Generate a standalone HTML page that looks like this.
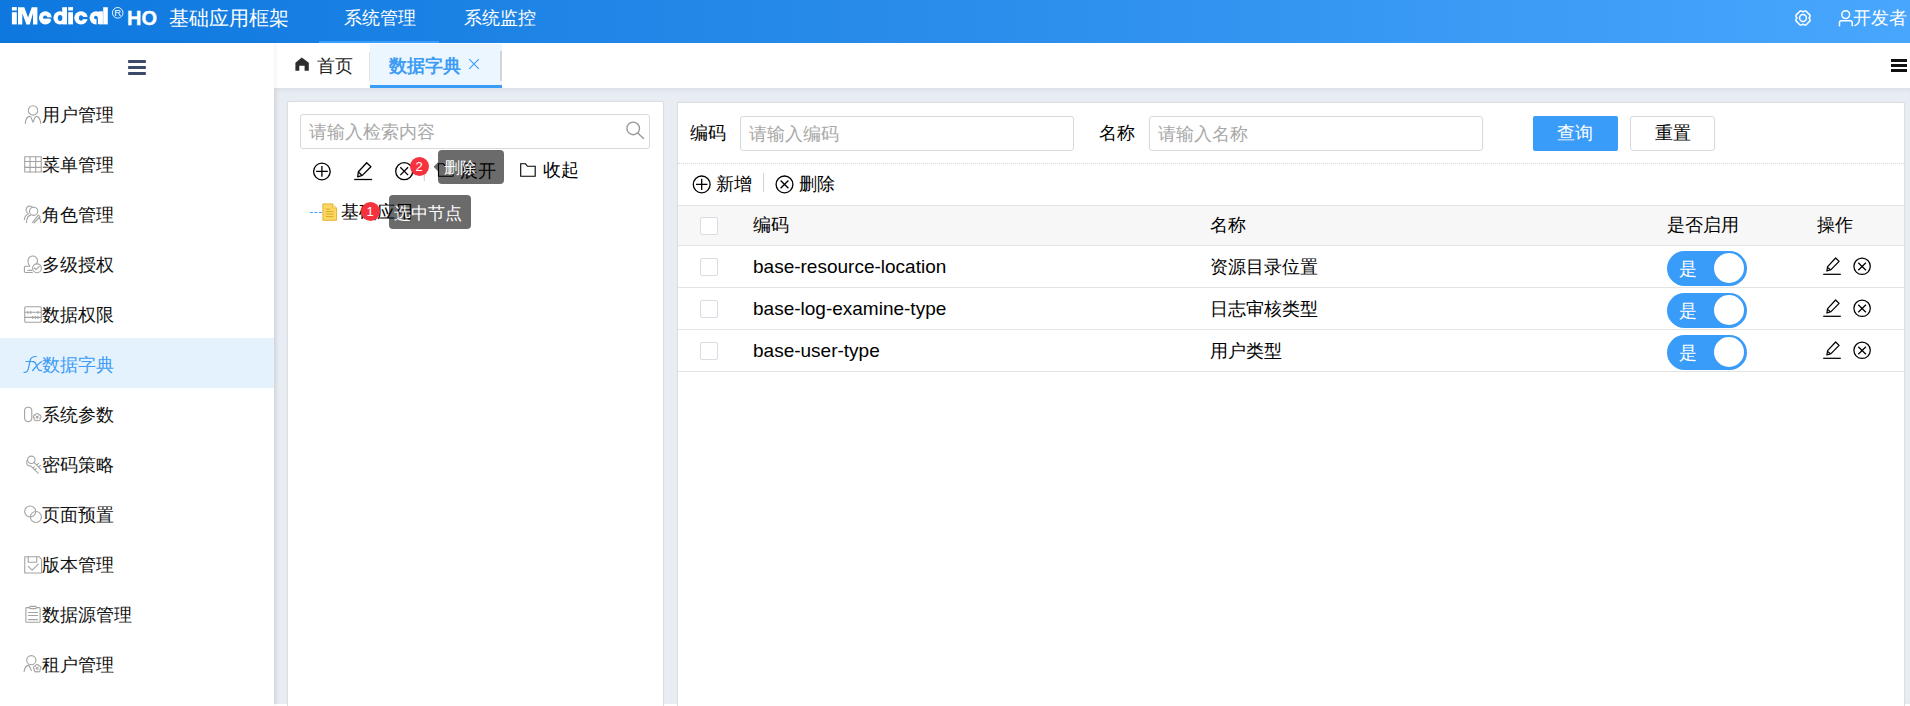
<!DOCTYPE html>
<html><head><meta charset="utf-8">
<style>
*{box-sizing:border-box;margin:0;padding:0}
html,body{width:1910px;height:706px;overflow:hidden;background:#fff;font-family:"Liberation Sans",sans-serif;color:#000}
.a{position:absolute}
.hdr{left:0;top:0;width:1910px;height:43px;background:linear-gradient(to right,#0e78df 0%,#2a8deb 50%,#48a6fd 100%)}
.w{color:#fff;white-space:nowrap;line-height:1}
.side{left:0;top:43px;width:274px;height:663px;background:#fff;box-shadow:1px 0 5px rgba(0,0,0,.07);z-index:3}
.mi{left:0;width:274px;height:50px}
.mi .t{position:absolute;left:41.5px;top:17px;font-size:17.5px;line-height:20px;white-space:nowrap;color:#111}
.mi.act{background:#e3f2fd}
.mi.act .t{color:#3d9cf5}
.mi svg.ic{position:absolute;left:20px;top:12px}
.tabbar{left:274px;top:43px;width:1636px;height:45px;background:#fff;z-index:2}
.content{left:274px;top:88px;width:1636px;height:616px;background:#e8ecf3;box-shadow:inset 2px 2px 4px rgba(0,0,0,.06)}
.card{background:#fff;border:1px solid #dcdde0;border-radius:2px;box-shadow:0 0 1.5px rgba(0,0,0,.06)}
.inp{border:1px solid #d6d9de;border-radius:3px;background:#fff}
.ph{color:#a8a8a8;font-size:18px;line-height:20px;white-space:nowrap}
.t18{font-size:18px;line-height:20px;white-space:nowrap}
.tip{background:rgba(0,0,0,.58);border-radius:4px;color:#fff;font-size:16px;line-height:18px;white-space:nowrap}
.badge{width:19px;height:19px;border-radius:50%;background:#f5333f;color:#fff;font-size:13px;line-height:19px;text-align:center}
.row{left:0;width:1226px;height:42px;border-bottom:1px solid #e3e3e3}
.cb{width:18px;height:18px;border:1px solid #d9dde3;border-radius:2px;background:#fff}
.tog{width:80px;height:35px;border-radius:18px;background:#3a9cf9}
.knob{width:30px;height:30px;border-radius:50%;background:#fff}
</style></head><body>
<!-- header -->
<div class="a hdr"></div>
<svg class="a" style="left:0;top:0" width="130" height="32" viewBox="0 0 130 32">
<defs><mask id="lm" maskUnits="userSpaceOnUse" x="0" y="0" width="130" height="32">
<rect x="0" y="0" width="130" height="32" fill="#000"/>
<g fill="#fff">
<rect x="11.9" y="7.1" width="4.9" height="3.4"/><rect x="11.9" y="12.2" width="4.9" height="12.2"/>
<path d="M18 24.4V7.2H24.3L28.05 17.4L31.8 7.2H37.4V24.4H33V13.2L29.75 24.4H26.4L22.3 13.2V24.4Z"/>
<ellipse cx="45.35" cy="17.85" rx="6.45" ry="6.55"/>
<ellipse cx="59.9" cy="17.85" rx="6.5" ry="6.55"/><rect x="62.2" y="7.2" width="4.8" height="17.2"/>
<rect x="68.2" y="7.1" width="4.8" height="3.4"/><rect x="68.2" y="12.2" width="4.8" height="12.2"/>
<ellipse cx="81" cy="17.85" rx="6.8" ry="6.55"/>
<ellipse cx="96.15" cy="17.85" rx="6.65" ry="6.55"/><rect x="99" y="11.3" width="3.9" height="13.1"/>
<rect x="103.2" y="7.2" width="4.6" height="17.2"/>
</g>
<g fill="#000">
<path d="M43.1 17.9A2.1 2.3 0 0 1 47.3 17.9Z"/><rect x="43.1" y="17.3" width="9" height="1.3"/><path d="M49.2 18.5H52V20.6Z"/>
<ellipse cx="60.1" cy="17.95" rx="2.3" ry="3.05"/>
<ellipse cx="81" cy="17.95" rx="2.05" ry="2.75"/><rect x="82" y="16.9" width="6" height="2.3"/>
<circle cx="95.8" cy="17.6" r="1.75"/><rect x="96.5" y="17.6" width="1.4" height="7"/>
</g>
</mask></defs>
<rect x="0" y="0" width="130" height="32" fill="#fff" mask="url(#lm)"/>
<circle cx="117.7" cy="12.8" r="5.3" fill="none" stroke="#fff" stroke-width="0.9"/>
<text x="117.7" y="16.3" font-size="9.5" fill="#fff" text-anchor="middle" font-family="Liberation Sans">R</text>
</svg>

<div class="a w" style="left:127px;top:8px;font-size:20px;font-weight:bold;-webkit-text-stroke:0.35px #fff">HO</div>
<div class="a w" style="left:169px;top:8px;font-size:20px">基础应用框架</div>
<div class="a w" style="left:344px;top:9px;font-size:18px">系统管理</div>
<div class="a" style="left:319px;top:41px;width:120px;height:2px;background:#3a9eff"></div>
<div class="a w" style="left:464px;top:9px;font-size:18px">系统监控</div>
<svg class="a" style="left:1790.2px;top:5.4px" width="26" height="26" viewBox="0 0 26 26" fill="none" stroke="#fff" stroke-width="1.5" stroke-linejoin="round"><path d="M10.10 6.00L11.70 6.00L13.00 7.00L14.30 6.00L15.90 6.00L20.00 10.10L20.00 11.70L19.00 13.00L20.00 14.30L20.00 15.90L15.90 20.00L14.30 20.00L13.00 19.00L11.70 20.00L10.10 20.00L6.00 15.90L6.00 14.30L7.00 13.00L6.00 11.70L6.00 10.10Z"/><circle cx="13" cy="13" r="3.4"/></svg>
<svg class="a" style="left:1836px;top:8px" width="20" height="20" viewBox="0 0 20 20" fill="none" stroke="#fff" stroke-width="1.5" stroke-linecap="round"><circle cx="9.7" cy="6.6" r="3.9"/><path d="M3.5 17.7V14.6Q3.5 12.7 5.4 12.7H14.3Q16.2 12.7 16.2 14.6V17.7"/></svg>
<div class="a w" style="left:1853px;top:9px;font-size:18px">开发者</div>

<!-- sidebar -->
<div class="a side">
  <div class="a" style="left:128px;top:17px;width:18px;height:2.5px;background:#3b4a6b;border-radius:1px"></div>
  <div class="a" style="left:128px;top:23px;width:18px;height:2.5px;background:#3b4a6b;border-radius:1px"></div>
  <div class="a" style="left:128px;top:29px;width:18px;height:2.5px;background:#3b4a6b;border-radius:1px"></div>
  <div class="a mi" style="top:45px"><svg class="ic" width="25" height="30" viewBox="0 0 25 30" fill="none" stroke="#a3a3a3" stroke-width="1.1" stroke-linecap="round" stroke-linejoin="round"><circle cx="13" cy="10.4" r="4.7"/><path d="M5.3 23.4C5.8 19 7.5 16.4 9.6 16.4C11 16.4 12.2 20 13 22.3C13.8 20 15 16.4 16.4 16.4C18.5 16.4 20.2 19 20.7 23.4"/></svg><span class="t">用户管理</span></div>
  <div class="a mi" style="top:95px"><svg class="ic" width="25" height="30" viewBox="0 0 25 30" fill="none" stroke="#a3a3a3" stroke-width="1.1" stroke-linecap="round" stroke-linejoin="round"><rect x="4.75" y="6.7" width="16.5" height="15.3"/><path d="M10 6.7V22M15.7 6.7V22M4.75 11.5H21.2M4.75 17.4H21.2"/></svg><span class="t">菜单管理</span></div>
  <div class="a mi" style="top:145px"><svg class="ic" width="25" height="30" viewBox="0 0 25 30" fill="none" stroke="#a3a3a3" stroke-width="1.1" stroke-linecap="round" stroke-linejoin="round"><path d="M12 6.6A3.9 3.9 0 1 0 8.2 13.4"/><circle cx="13.6" cy="11.3" r="4.1"/><path d="M4.3 19.6C4.8 16.5 6.3 14.6 8 14.2"/><path d="M6.4 22.5C6.8 18 8.5 15.6 10.5 15.4"/><path d="M12.3 22.5L18.4 15.2L20 16.6L13.9 23M20.8 22.5C20.6 20 20 18.5 19.5 17.5"/></svg><span class="t">角色管理</span></div>
  <div class="a mi" style="top:195px"><svg class="ic" width="25" height="30" viewBox="0 0 25 30" fill="none" stroke="#a3a3a3" stroke-width="1.1" stroke-linecap="round" stroke-linejoin="round"><path d="M9.6 15.8C8.3 14.8 8 13 8 11.2A4.75 4.75 0 0 1 17.5 10.4C17.4 11.5 17.2 12.6 16.6 13.6"/><path d="M12.3 22.5H5.5Q4.4 22.5 4.4 21.3V17.4Q4.4 16.2 5.5 16.2H9.6"/><path d="M8 20.4H11.9"/><circle cx="17" cy="18.3" r="4.4"/><path d="M14.3 18L16 19.6L19.3 16.4"/></svg><span class="t">多级授权</span></div>
  <div class="a mi" style="top:245px"><svg class="ic" width="25" height="30" viewBox="0 0 25 30" fill="none" stroke="#a3a3a3" stroke-width="1.1" stroke-linecap="round" stroke-linejoin="round"><rect x="4.75" y="6.7" width="16.5" height="15.6" rx="1"/><path d="M4.75 12.3H21.2M4.75 17.4H21.2M7.9 11.2V13.4M10.8 11.2V13.4M18 11.2V13.4M12.75 16.3V18.5M15.3 16.3V18.5M17.9 16.3V18.5"/></svg><span class="t">数据权限</span></div>
  <div class="a mi act" style="top:295px"><svg class="ic" width="25" height="30" viewBox="0 0 25 30" fill="none" stroke="#3d9cf5" stroke-width="1.2" stroke-linecap="round"><path d="M4 22.4C6.3 22.6 7.6 21.8 8.3 18.8L10.3 10C10.9 7.5 12.4 6.4 16.2 6.5"/><path d="M6 11.5H13.2"/><path d="M12.4 11.7C14.3 11.2 15.2 12.2 16.1 14.5L17.6 18.2C18.4 20.2 19.6 20.9 21.6 20.4"/><path d="M12.6 20.6C14.5 18.6 17.5 14.2 21.8 11.6"/></svg><span class="t">数据字典</span></div>
  <div class="a mi" style="top:345px"><svg class="ic" width="25" height="30" viewBox="0 0 25 30" fill="none" stroke="#a3a3a3" stroke-width="1.1" stroke-linecap="round" stroke-linejoin="round"><rect x="4.6" y="7.3" width="7.2" height="14.3" rx="3.5"/><path d="M15.55 15.03C15.10 12.95 19.30 12.95 18.85 15.03C20.69 13.96 21.99 17.95 19.86 18.17C21.46 19.58 18.06 22.05 17.20 20.10C16.34 22.05 12.94 19.58 14.54 18.17C12.41 17.95 13.71 13.96 15.55 15.03Z"/><circle cx="17.2" cy="17.3" r="0.9"/></svg><span class="t">系统参数</span></div>
  <div class="a mi" style="top:395px"><svg class="ic" width="25" height="30" viewBox="0 0 25 30" fill="none" stroke="#a3a3a3" stroke-width="1.1" stroke-linecap="round" stroke-linejoin="round"><circle cx="11.3" cy="9.8" r="3.7"/><path d="M7.5 9.6A4 4 0 0 0 10.2 16.2"/><path d="M14 12.4L21 19.6M18.5 13.4L17.2 14.7M20.4 15.3L19.1 16.6M10.6 15.8L18.2 23.2M14.3 16.8L13 18.1M16.2 18.7L14.9 20"/></svg><span class="t">密码策略</span></div>
  <div class="a mi" style="top:445px"><svg class="ic" width="25" height="30" viewBox="0 0 25 30" fill="none" stroke="#a3a3a3" stroke-width="1.1" stroke-linecap="round" stroke-linejoin="round"><circle cx="10.2" cy="11.5" r="5.5"/><circle cx="15.9" cy="17" r="5.5"/></svg><span class="t">页面预置</span></div>
  <div class="a mi" style="top:495px"><svg class="ic" width="25" height="30" viewBox="0 0 25 30" fill="none" stroke="#a3a3a3" stroke-width="1.1" stroke-linecap="round" stroke-linejoin="round"><path d="M4.75 6.7H19L21.6 9.3V23H4.75Z"/><path d="M8.2 6.7V12.3H16.7V6.7"/><path d="M8.3 16.4L12.1 20.2L18.3 14.2"/></svg><span class="t">版本管理</span></div>
  <div class="a mi" style="top:545px"><svg class="ic" width="25" height="30" viewBox="0 0 25 30" fill="none" stroke="#a3a3a3" stroke-width="1.1" stroke-linecap="round" stroke-linejoin="round"><rect x="5.9" y="7.6" width="14.2" height="14.6" rx="0.8"/><rect x="9.5" y="6.4" width="7" height="2.2" rx="1.1" fill="#fff"/><path d="M8.5 12.5H17.6M8.5 15.5H17.6M8.5 19.6H17.6"/></svg><span class="t">数据源管理</span></div>
  <div class="a mi" style="top:595px"><svg class="ic" width="25" height="30" viewBox="0 0 25 30" fill="none" stroke="#a3a3a3" stroke-width="1.1" stroke-linecap="round" stroke-linejoin="round"><circle cx="11.3" cy="10.2" r="4.6"/><path d="M4.1 21.7C4.6 18 6.3 15.6 8.5 15.1C9.5 16.5 10.6 18.8 11.5 20.6"/><path d="M15.55 16.13C15.10 14.05 19.30 14.05 18.85 16.13C20.69 15.06 21.99 19.05 19.86 19.27C21.46 20.68 18.06 23.15 17.20 21.20C16.34 23.15 12.94 20.68 14.54 19.27C12.41 19.05 13.71 15.06 15.55 16.13Z"/><circle cx="17.2" cy="18.4" r="0.9"/></svg><span class="t">租户管理</span></div>
</div>

<!-- tab bar -->
<div class="a tabbar">
  <div class="a t18" style="left:43px;top:13px;color:#222;font-size:17.5px">首页</div>
  <div class="a" style="left:95px;top:9px;width:1px;height:29px;background:#e2e2e2"></div>
  <div class="a" style="left:96px;top:1px;width:132px;height:44px;background:#ecf6fe"></div>
  <div class="a" style="left:96px;top:42px;width:132px;height:3px;background:#3a9cf9"></div>
  <div class="a t18" style="left:115px;top:12.5px;color:#3d9cf5;font-weight:bold;font-size:17.5px">数据字典</div>
  <div class="a" style="left:226px;top:8px;width:2px;height:30px;background:#d4d4d4"></div>
  <svg class="a" style="left:14px;top:7px" width="30" height="30" viewBox="288 50 30 30"><path d="M301.8 57.6L308.8 62.8V70.8H304.6V65.7H299.3V70.8H295.4V62.8Z" fill="#2d2d2d"/></svg>
  <svg class="a" style="left:186px;top:7px" width="30" height="30" viewBox="460 50 30 30" fill="none" stroke="#3d9cf5" stroke-width="1.1"><path d="M469.2 59.2L478.8 68.8M478.8 59.2L469.2 68.8"/></svg>
  <div class="a" style="left:1617px;top:16px;width:16px;height:2.6px;background:#111"></div>
  <div class="a" style="left:1617px;top:21px;width:16px;height:2.6px;background:#111"></div>
  <div class="a" style="left:1617px;top:26px;width:16px;height:2.6px;background:#111"></div>
</div>

<!-- content -->
<div class="a content"></div>

<!-- left card -->
<div class="a card" style="left:287px;top:101px;width:377px;height:620px"></div>
<div class="a inp" style="left:300px;top:114px;width:350px;height:35px"></div>
<div class="a ph" style="left:309px;top:122px">请输入检索内容</div>
<svg class="a" style="left:620px;top:118px" width="30" height="26" viewBox="620 118 30 26" fill="none" stroke="#9a9a9a" stroke-width="1.4" stroke-linecap="round"><circle cx="633.2" cy="128.4" r="6.3"/><path d="M637.7 132.9L643.6 138.6"/></svg>
<svg class="a" style="left:300px;top:150px" width="300" height="40" viewBox="300 150 300 40" fill="none" stroke="#000" stroke-width="1.3">
<circle cx="321.9" cy="171.5" r="8.3"/><path d="M316.1 171.3H327.8M321.9 166.1V176.8"/>
<path d="M358.4 171.7L366.7 162.8L370.9 166.7L362.3 175.4L357.7 176.8Z" stroke-linejoin="round"/><path d="M359 172.5L361.6 175"/><path d="M354.2 179.5H372.1"/>
<circle cx="404.2" cy="171.2" r="8.5"/><path d="M400.3 167.3L408.1 175.1M408.1 167.3L400.3 175.1"/>
<path d="M424.3 163V181" stroke="#c8c8c8" stroke-width="1"/>
<path d="M438.5 176.2V163.8H443.3L445.3 166.3H453V176.2Z" stroke-width="1.1"/>
<path d="M520.7 176.2V163.8H525.5L527.5 166.3H535.2V176.2Z" stroke-width="1.1"/>
</svg>
<div class="a t18" style="left:460px;top:161px">展开</div>
<div class="a t18" style="left:543px;top:160px">收起</div>
<div class="a badge" style="left:409.6px;top:157.1px">2</div>
<div class="a tip" style="left:438px;top:150px;width:66px;height:34px"></div>
<svg class="a" style="left:432px;top:160px" width="8" height="14" viewBox="0 0 8 14"><path d="M1.6 6.7L6 2.2V11.2Z" fill="rgba(0,0,0,.58)"/></svg>
<div class="a tip" style="left:443.5px;top:158.5px;background:none">删除</div>
<svg class="a" style="left:300px;top:185px" width="40" height="40" viewBox="300 185 40 40">
<path d="M310 212.5H322.2" stroke="#3a9cf9" stroke-width="1.2" stroke-dasharray="2.8 1.7"/>
<path d="M322.9 203.9H332.4L336.6 208V220.3H322.9Z" fill="#fcd862" stroke="#e2b434" stroke-width="1"/>
<path d="M332.4 203.9V208H336.6" fill="#f5e6a8" stroke="#e2b434" stroke-width="0.8"/>
<path d="M325.8 209.1H330.4M325.8 211.6H333.6M325.8 214.1H333.6M325.8 216.6H333.6" stroke="#d4a523" stroke-width="0.9"/>
</svg>
<div class="a t18" style="left:341px;top:202px">基础应用</div>
<div class="a badge" style="left:360.7px;top:202px">1</div>
<div class="a tip" style="left:389px;top:195px;width:82px;height:34px"></div>
<div class="a tip" style="left:394px;top:203.5px;background:none;font-size:16.5px">选中节点</div>


<!-- right card -->
<div class="a card" style="left:677px;top:102px;width:1228px;height:620px"></div>
<div class="a t18" style="left:690px;top:123px">编码</div>
<div class="a inp" style="left:740px;top:116px;width:334px;height:35px"></div>
<div class="a ph" style="left:749px;top:124px">请输入编码</div>
<div class="a t18" style="left:1099px;top:123px">名称</div>
<div class="a inp" style="left:1149px;top:116px;width:334px;height:35px"></div>
<div class="a ph" style="left:1158px;top:124px">请输入名称</div>
<div class="a" style="left:1533px;top:116px;width:85px;height:35px;background:#3a9cf9;border-radius:2px"></div>
<div class="a t18 w" style="left:1557px;top:123px">查询</div>
<div class="a inp" style="left:1630px;top:116px;width:85px;height:35px"></div>
<div class="a t18" style="left:1655px;top:123px">重置</div>
<div class="a" style="left:678px;top:163px;width:1226px;height:0;border-top:1px dotted #d8d8d8"></div>
<svg class="a" style="left:680px;top:165px" width="130" height="30" viewBox="680 165 130 30" fill="none" stroke="#000" stroke-width="1.3">
<circle cx="701.7" cy="184.4" r="8.4"/><path d="M696 184.4H707.4M701.7 178.8V190"/>
<path d="M763.6 173V192.3" stroke="#d0d0d0" stroke-width="1"/>
<circle cx="784.5" cy="184.4" r="8.4"/><path d="M780.6 180.5L788.4 188.3M788.4 180.5L780.6 188.3"/>
</svg>
<div class="a t18" style="left:716px;top:174px">新增</div>
<div class="a t18" style="left:799px;top:174px">删除</div>
<div class="a" style="left:678px;top:205px;width:1226px;height:41px;background:#f7f7f7;border-top:1px solid #e3e3e3;border-bottom:1px solid #e3e3e3"></div>
<div class="a cb" style="left:700px;top:217px"></div>
<div class="a t18" style="left:753px;top:215px">编码</div>
<div class="a t18" style="left:1210px;top:215px">名称</div>
<div class="a t18" style="left:1667px;top:215px">是否启用</div>
<div class="a t18" style="left:1817px;top:215px">操作</div>
<div class="a" style="left:678px;top:246px;width:1226px;height:42px;border-bottom:1px solid #e3e3e3"></div>
<div class="a cb" style="left:700px;top:258px"></div>
<div class="a" style="left:753px;top:255.5px;font-size:19px;line-height:22px;white-space:nowrap">base-resource-location</div>
<div class="a t18" style="left:1210px;top:257px">资源目录位置</div>
<div class="a tog" style="left:1667px;top:251px"></div>
<div class="a knob" style="left:1714px;top:253px"></div>
<div class="a t18 w" style="left:1679px;top:259px;font-size:18px">是</div>
<svg class="a" style="left:1815px;top:250px" width="64" height="32" viewBox="1815 250 64 32" fill="none" stroke="#000" stroke-width="1.25">
<path d="M1827.6 266.6L1835.6 258L1839.1 261.4L1831 269.6L1826.9 271Z" stroke-linejoin="round"/><path d="M1828 267.6L1830.3 269.8"/><path d="M1823.2 274.3H1840.8"/>
<circle cx="1862.1" cy="266.3" r="8.2"/><path d="M1858.3 262.7L1865.9 270.2M1865.9 262.7L1858.3 270.2"/>
</svg>
<div class="a" style="left:678px;top:288px;width:1226px;height:42px;border-bottom:1px solid #e3e3e3"></div>
<div class="a cb" style="left:700px;top:300px"></div>
<div class="a" style="left:753px;top:297.5px;font-size:19px;line-height:22px;white-space:nowrap">base-log-examine-type</div>
<div class="a t18" style="left:1210px;top:299px">日志审核类型</div>
<div class="a tog" style="left:1667px;top:293px"></div>
<div class="a knob" style="left:1714px;top:295px"></div>
<div class="a t18 w" style="left:1679px;top:301px;font-size:18px">是</div>
<svg class="a" style="left:1815px;top:292px" width="64" height="32" viewBox="1815 250 64 32" fill="none" stroke="#000" stroke-width="1.25">
<path d="M1827.6 266.6L1835.6 258L1839.1 261.4L1831 269.6L1826.9 271Z" stroke-linejoin="round"/><path d="M1828 267.6L1830.3 269.8"/><path d="M1823.2 274.3H1840.8"/>
<circle cx="1862.1" cy="266.3" r="8.2"/><path d="M1858.3 262.7L1865.9 270.2M1865.9 262.7L1858.3 270.2"/>
</svg>
<div class="a" style="left:678px;top:330px;width:1226px;height:42px;border-bottom:1px solid #e3e3e3"></div>
<div class="a cb" style="left:700px;top:342px"></div>
<div class="a" style="left:753px;top:339.5px;font-size:19px;line-height:22px;white-space:nowrap">base-user-type</div>
<div class="a t18" style="left:1210px;top:341px">用户类型</div>
<div class="a tog" style="left:1667px;top:335px"></div>
<div class="a knob" style="left:1714px;top:337px"></div>
<div class="a t18 w" style="left:1679px;top:343px;font-size:18px">是</div>
<svg class="a" style="left:1815px;top:334px" width="64" height="32" viewBox="1815 250 64 32" fill="none" stroke="#000" stroke-width="1.25">
<path d="M1827.6 266.6L1835.6 258L1839.1 261.4L1831 269.6L1826.9 271Z" stroke-linejoin="round"/><path d="M1828 267.6L1830.3 269.8"/><path d="M1823.2 274.3H1840.8"/>
<circle cx="1862.1" cy="266.3" r="8.2"/><path d="M1858.3 262.7L1865.9 270.2M1865.9 262.7L1858.3 270.2"/>
</svg>
</body></html>
